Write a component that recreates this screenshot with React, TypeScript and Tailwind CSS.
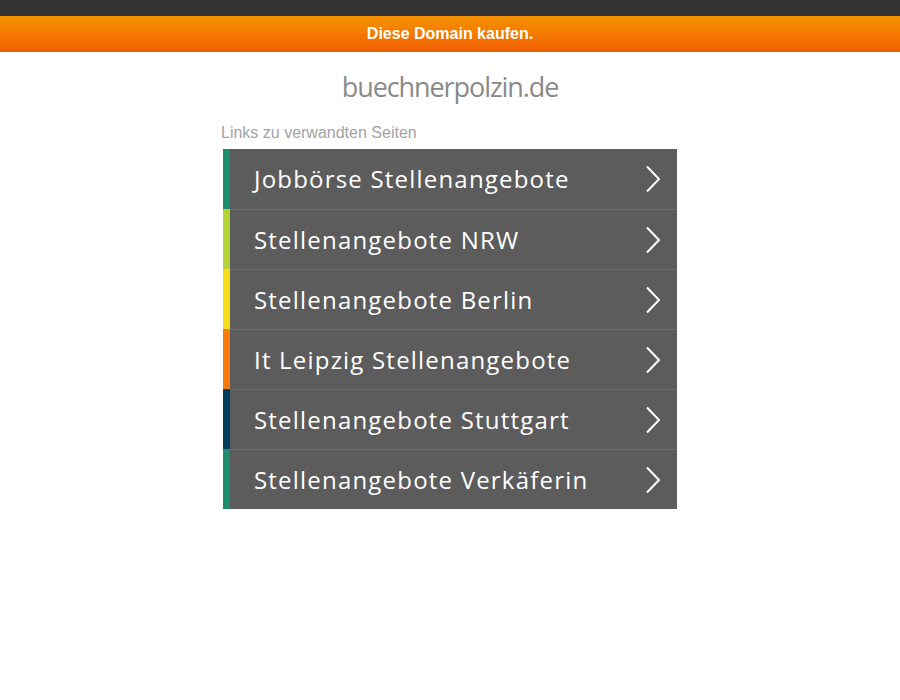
import React from 'react';

const links = [
  { label: 'Jobbörse Stellenangebote', color: 'bg-[#1e8c6e]' },
  { label: 'Stellenangebote NRW', color: 'bg-[#b5d334]' },
  { label: 'Stellenangebote Berlin', color: 'bg-[#f7dc1b]' },
  { label: 'It Leipzig Stellenangebote', color: 'bg-[#f77b09]' },
  { label: 'Stellenangebote Stuttgart', color: 'bg-[#013f5a]' },
  { label: 'Stellenangebote Verkäferin', color: 'bg-[#1e8c6e]' },
];

const Chevron = () => (
  <svg width="16" height="28" viewBox="0 0 16 28" fill="none" className="shrink-0">
    <path d="M2 1.5 L14 14 L2 26.5" stroke="white" strokeWidth="2" />
  </svg>
);

export default function App() {
  return (
    <div className="min-h-[700px] bg-white font-['Liberation_Sans',Arial,sans-serif]">
      <div className="h-4 bg-[#323232]" />
      <div className="h-[36px] bg-gradient-to-b from-[#f69200] to-[#f05e00] flex items-center justify-center">
        <span className="text-white font-bold text-[16px]">Diese Domain kaufen.</span>
      </div>

      <div className="w-[454px] mx-auto">
        <h1 className="mt-[20px] text-center text-[27px] leading-[30px] text-[#8a8a8a] tracking-[-0.04em] font-['Open_Sans',sans-serif]">
          buechnerpolzin.de
        </h1>
        <p className="mt-[21px] -ml-[2px] text-[16px] leading-[20px] text-[#a3a3a3]">Links zu verwandten Seiten</p>

        <ul className="mt-[6px]">
          {links.map((link, i) => (
            <li key={i} className="flex h-[60px]">
              <div className={`w-[7px] ${link.color}`} />
              <a
                href="#"
                className={`flex-1 flex items-center justify-between pl-[24px] pr-[16px] bg-[#5c5c5c] text-white ${
                  i > 0 ? 'border-t border-[#6c6c6c]' : ''
                }`}
              >
                <span className="text-[24px] font-['Open_Sans',sans-serif] tracking-[0.05em]">{link.label}</span>
                <Chevron />
              </a>
            </li>
          ))}
        </ul>
      </div>
    </div>
  );
}
